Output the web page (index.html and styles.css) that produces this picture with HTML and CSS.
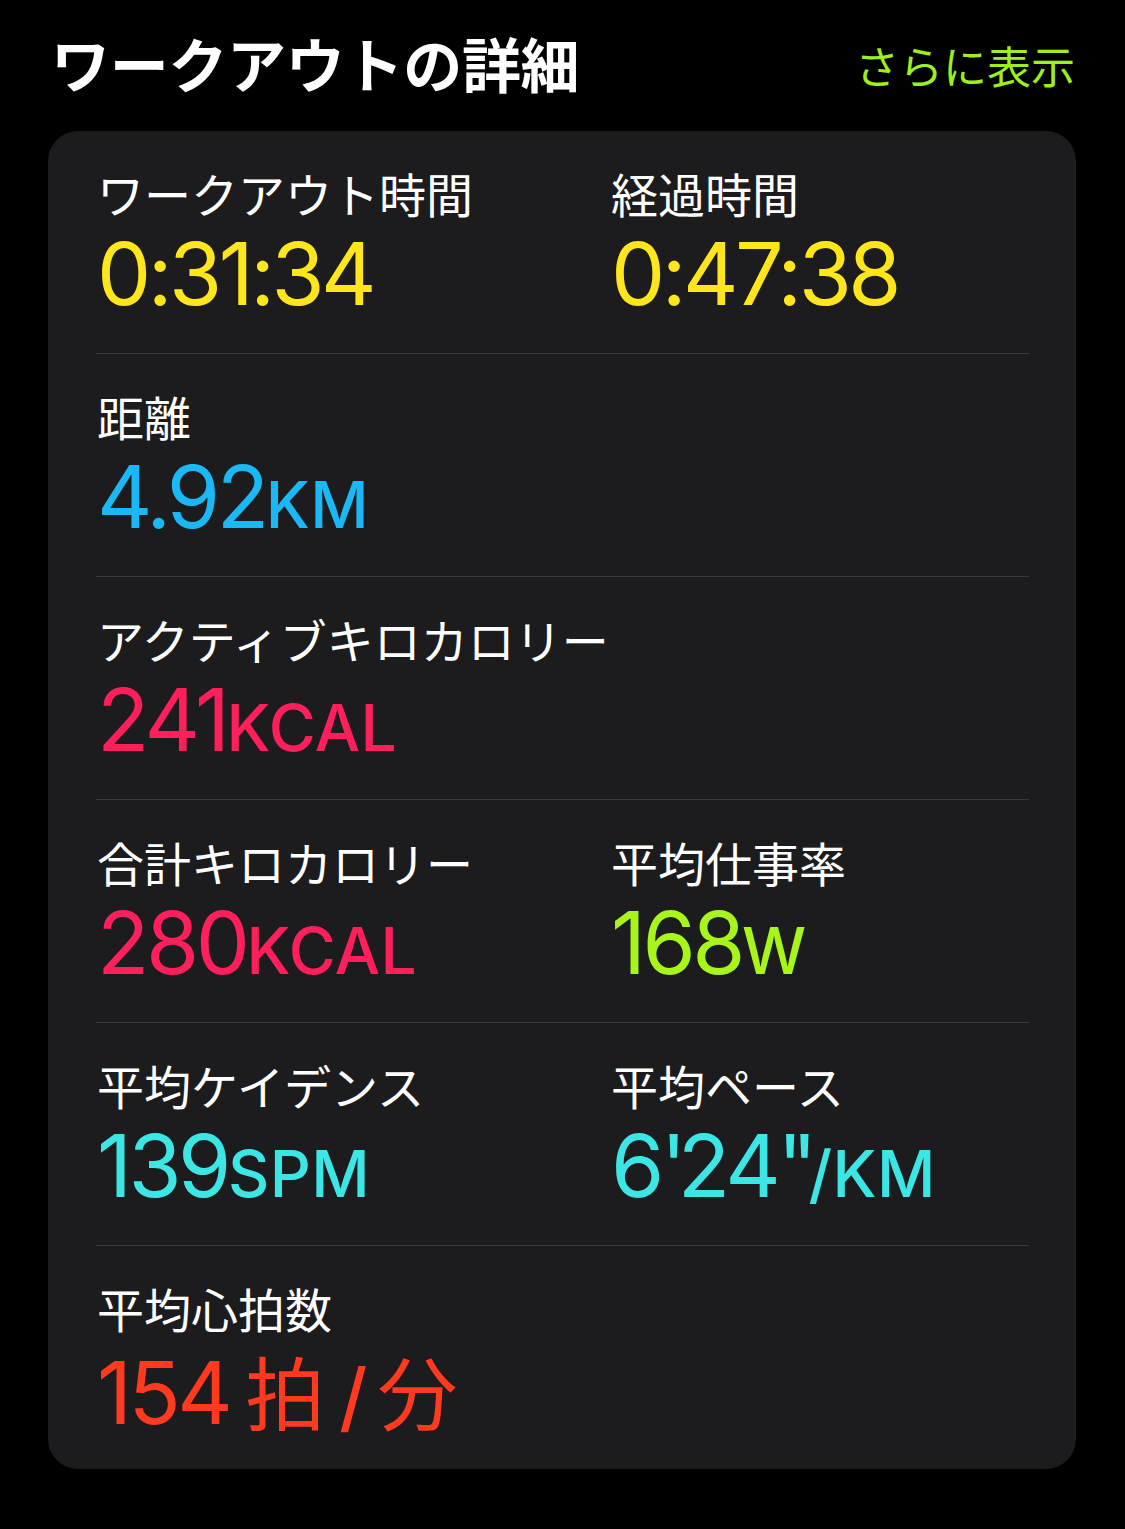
FILE: index.html
```html
<!DOCTYPE html>
<html lang="ja">
<head>
<meta charset="utf-8">
<link rel="stylesheet" href="styles.css">
</head>
<body>
<header class="header">
  <h1 class="title">ワークアウトの詳細</h1>
  <a class="more">さらに表示</a>
</header>
<section class="card">
  <div class="row">
    <div class="cell">
      <div class="label">ワークアウト時間</div>
      <div class="value yellow">0:31:34</div>
    </div>
    <div class="cell">
      <div class="label">経過時間</div>
      <div class="value yellow">0:47:38</div>
    </div>
  </div>
  <div class="row">
    <div class="cell">
      <div class="label">距離</div>
      <div class="value blue">4.92<span class="unit">KM</span></div>
    </div>
  </div>
  <div class="row">
    <div class="cell">
      <div class="label">アクティブキロカロリー</div>
      <div class="value pink">241<span class="unit">KCAL</span></div>
    </div>
  </div>
  <div class="row">
    <div class="cell">
      <div class="label">合計キロカロリー</div>
      <div class="value pink">280<span class="unit">KCAL</span></div>
    </div>
    <div class="cell">
      <div class="label">平均仕事率</div>
      <div class="value green">168<span class="unit">W</span></div>
    </div>
  </div>
  <div class="row">
    <div class="cell">
      <div class="label">平均ケイデンス</div>
      <div class="value cyan">139<span class="unit">SPM</span></div>
    </div>
    <div class="cell">
      <div class="label">平均ペース</div>
      <div class="value cyan">6<span class="q">'</span>24<span class="q">"</span><span class="unit">/KM</span></div>
    </div>
  </div>
  <div class="row last">
    <div class="cell">
      <div class="label">平均心拍数</div>
      <div class="value red">154<span class="cjk">拍</span><span class="slash">/</span><span class="cjk">分</span></div>
    </div>
  </div>
</section>
</body>
</html>
```

FILE: styles.css
```css
html, body {
  margin: 0;
  padding: 0;
  background: #000;
}
body {
  width: 1125px;
  height: 1529px;
  font-family: "Noto Sans CJK JP", "Noto Sans", sans-serif;
  color: #fff;
}
.header {
  height: 131px;
  box-sizing: border-box;
  display: flex;
  justify-content: space-between;
  align-items: flex-start;
  padding: 21px 50px 0 51px;
}
.title {
  margin: 0;
  font-size: 59px;
  font-weight: 700;
  line-height: 84px;
  letter-spacing: -0.3px;
}
.more {
  font-size: 44px;
  line-height: 84px;
  margin-top: 2px;
  color: #9cf01c;
}
.card {
  margin: 0 49px 0 48px;
  background: #1c1c1e;
  border-radius: 30px;
  padding: 0 47px 0 48px;
}
.row {
  display: grid;
  grid-template-columns: 514px 1fr;
  height: 222px;
  border-bottom: 1px solid #3a3a3c;
  box-sizing: content-box;
}
.row.last {
  border-bottom: none;
  height: 223px;
}
.cell {
  padding-top: 32px;
  padding-left: 1px;
}
.label {
  font-size: 47px;
  line-height: 60px;
  white-space: nowrap;
}
.value {
  font-family: "Inter", "Noto Sans", sans-serif;
  font-weight: 400;
  font-size: 86px;
  line-height: 96px;
  padding-top: 3px;
  letter-spacing: -3.5px;
  white-space: nowrap;
}
.unit {
  font-size: 64px;
  font-weight: 500;
  letter-spacing: 0.5px;
}
.q {
  letter-spacing: -9px;
}
.cjk {
  font-family: "Noto Sans CJK JP", sans-serif;
  font-weight: 400;
  font-size: 80px;
  letter-spacing: 0;
  margin-left: 16px;
}
.slash {
  font-size: 76px;
  font-weight: 500;
  letter-spacing: 0;
  margin: 0 -6px 0 14px;
}
.yellow { color: #ffe51c; }
.blue { color: #1ab9f5; }
.pink { color: #ff1f5a; }
.green { color: #a7f51a; }
.cyan { color: #3be6e4; }
.red { color: #ff3a1e; }
```
